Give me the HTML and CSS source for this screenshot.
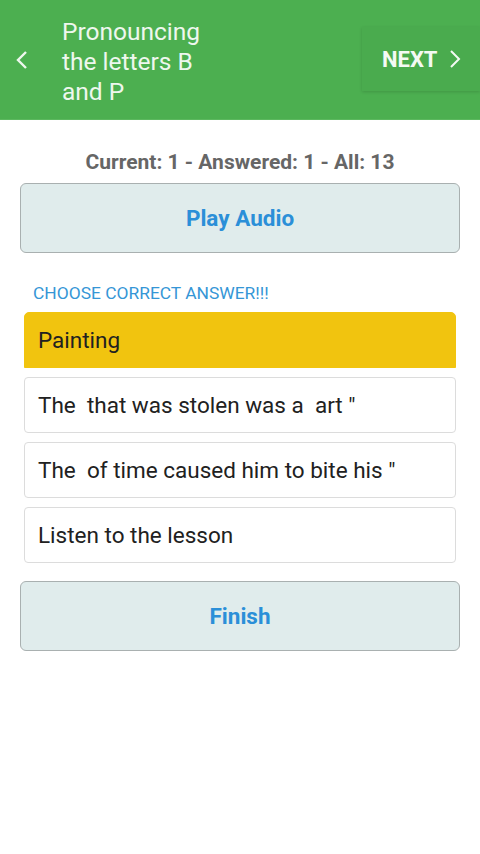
FILE: index.html
```html
<!DOCTYPE html>
<html lang="en">
<head>
    <meta charset="UTF-8">
    <meta name="viewport" content="width=device-width, initial-scale=1.0">
    <title>Pronouncing the letters B and P</title>
    <link rel="stylesheet" href="styles.css">
</head>
<body>
    <header class="toolbar">
        <button class="back" aria-label="Back">
            <svg width="14" height="22" viewBox="0 0 14 22"><path d="M11 3 L3 11 L11 19" fill="none" stroke="currentColor" stroke-width="2.4"/></svg>
        </button>
        <h1 class="title">Pronouncing the letters B and P</h1>
        <button class="next">
            <span>NEXT</span>
            <svg width="14" height="22" viewBox="0 0 14 22"><path d="M3 3 L11 11 L3 19" fill="none" stroke="currentColor" stroke-width="2"/></svg>
        </button>
    </header>

    <main class="content">
        <div class="progress">Current: 1 - Answered: 1 - All: 13</div>
        <button class="action">Play Audio</button>

        <div class="prompt">CHOOSE CORRECT ANSWER!!!</div>
        <ul class="answers">
            <li class="answer selected">Painting</li>
            <li class="answer">The &nbsp;that was stolen was a &nbsp;art "</li>
            <li class="answer">The &nbsp;of time caused him to bite his "</li>
            <li class="answer">Listen to the lesson</li>
        </ul>

        <button class="action finish">Finish</button>
    </main>
</body>
</html>
```

FILE: styles.css
```css
body {
    margin: 0;
    font-family: Roboto, "Noto Sans", sans-serif;
    background-color: #fff;
}

.toolbar {
    height: 120px;
    background-color: #4caf50;
    border-bottom: 1px solid #5cb85f;
    box-sizing: border-box;
    display: flex;
    align-items: center;
}

.toolbar button {
    background: none;
    border: none;
    font-family: inherit;
    cursor: pointer;
}

.back {
    width: 62px;
    padding: 0 0 0 15px;
    color: #eef7ee;
    display: flex;
    align-items: center;
}

.title {
    width: 160px;
    margin: 0 auto 0 0;
    padding-top: 4px;
    font-size: 24.5px;
    font-weight: normal;
    line-height: 30px;
    color: #eef7ee;
}

.next {
    width: 118px;
    height: 64px;
    margin-top: -1px;
    background-color: #4aab4e !important;
    box-shadow: 0 1px 3px rgba(0,0,0,0.15);
    display: flex;
    align-items: center;
    gap: 10px;
    padding: 0 0 0 20px;
    color: #f4faf4;
    font-size: 22px;
    font-weight: bold;
}

.content {
    padding: 30px 20px 0 20px;
}

.progress {
    text-align: center;
    font-size: 21px;
    font-weight: bold;
    color: #666;
    line-height: 24px;
}

.action {
    display: block;
    width: 100%;
    height: 70px;
    margin-top: 9px;
    background-color: #e0ecec;
    border: 1px solid #a9b0b0;
    border-radius: 6px;
    color: #2b8fd8;
    font-family: inherit;
    font-size: 22.5px;
    font-weight: bold;
    cursor: pointer;
}

.prompt {
    margin: 29px 0 0 13px;
    font-size: 17.4px;
    color: #3596d6;
    line-height: 22px;
}

.answers {
    list-style: none;
    margin: 8px 4px 0 4px;
    padding: 0;
    display: flex;
    flex-direction: column;
    gap: 9px;
}

.answer {
    height: 56px;
    box-sizing: border-box;
    border: 1px solid #dcdcdc;
    border-radius: 4px;
    padding: 0 13px;
    display: flex;
    align-items: center;
    font-size: 22.5px;
    color: #212121;
    background-color: #fff;
}

.answer.selected {
    background-color: #f1c40f;
    border-color: #f1c40f;
    border-radius: 5px 5px 0 0;
}

.finish {
    margin-top: 18px;
}
```
